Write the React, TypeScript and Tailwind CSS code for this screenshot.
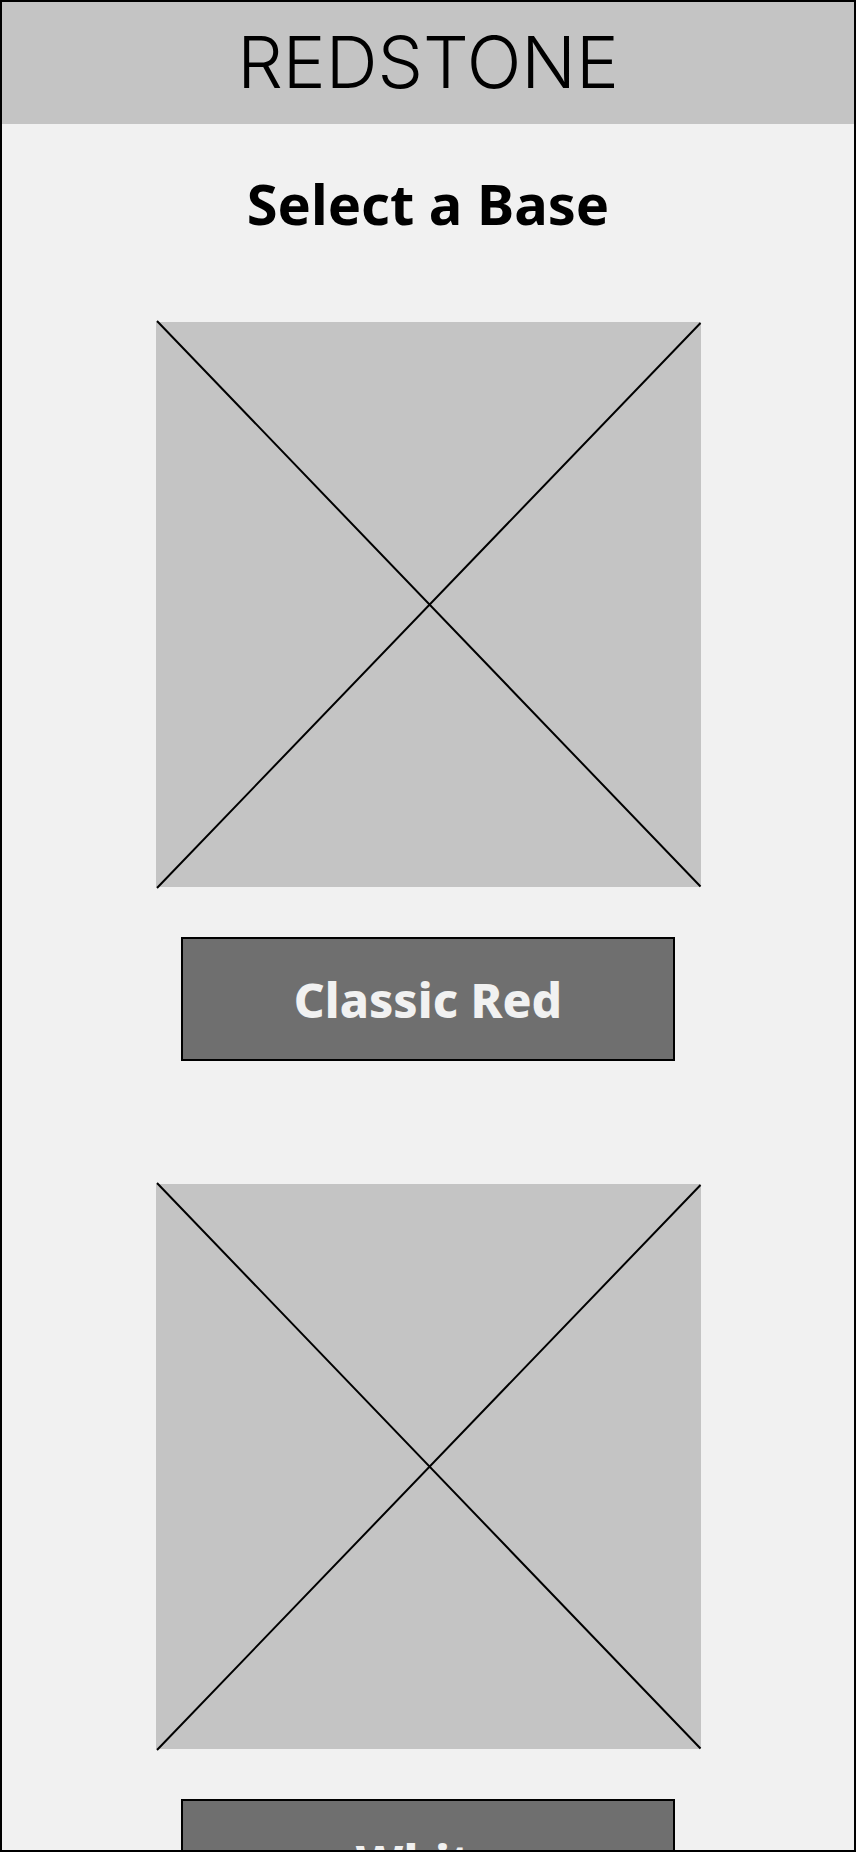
import React from "react";

const bases = ["Classic Red", "White"];

function ImagePlaceholder({ label }: { label: string }) {
  return (
    <svg
      role="img"
      aria-label={label}
      viewBox="0 0 545 565"
      className="block w-full max-w-[545px] overflow-visible bg-[#c4c4c4]"
      fill="none"
      stroke="#000"
      strokeWidth="2"
    >
      <path d="M1 -1L544.500 564.500M1 566L544.500 1" />
    </svg>
  );
}

function BaseOption({ name }: { name: string }) {
  return (
    <li className="flex w-full flex-col items-center gap-[50px]">
      <ImagePlaceholder label={name} />
      <button
        type="button"
        className="w-full max-w-[494px] cursor-pointer border-2 border-black bg-[#6f6f6f] pt-[29px] pb-[27px] text-5xl leading-[64px] font-extrabold text-[#f1f1f1]"
      >
        {name}
      </button>
    </li>
  );
}

export default function App() {
  return (
    <div className="flex h-screen flex-col overflow-hidden border-2 border-black bg-[#f1f1f1] font-['Noto_Sans',sans-serif] text-black">
      <header className="shrink-0 bg-[#c4c4c4] pt-6 pb-[26px] text-center">
        <h1 className="font-['Inter',sans-serif] text-7xl leading-[72px] font-light">REDSTONE</h1>
      </header>
      <main className="min-h-0 grow overflow-y-auto px-6 pt-[47px] pb-16 [scrollbar-width:none]">
        <h2 className="text-center text-[56px] leading-[64px] font-bold">Select a Base</h2>
        <ul className="mt-[87px] flex flex-col gap-[123px]">
          {bases.map((name) => (
            <BaseOption key={name} name={name} />
          ))}
        </ul>
      </main>
    </div>
  );
}
